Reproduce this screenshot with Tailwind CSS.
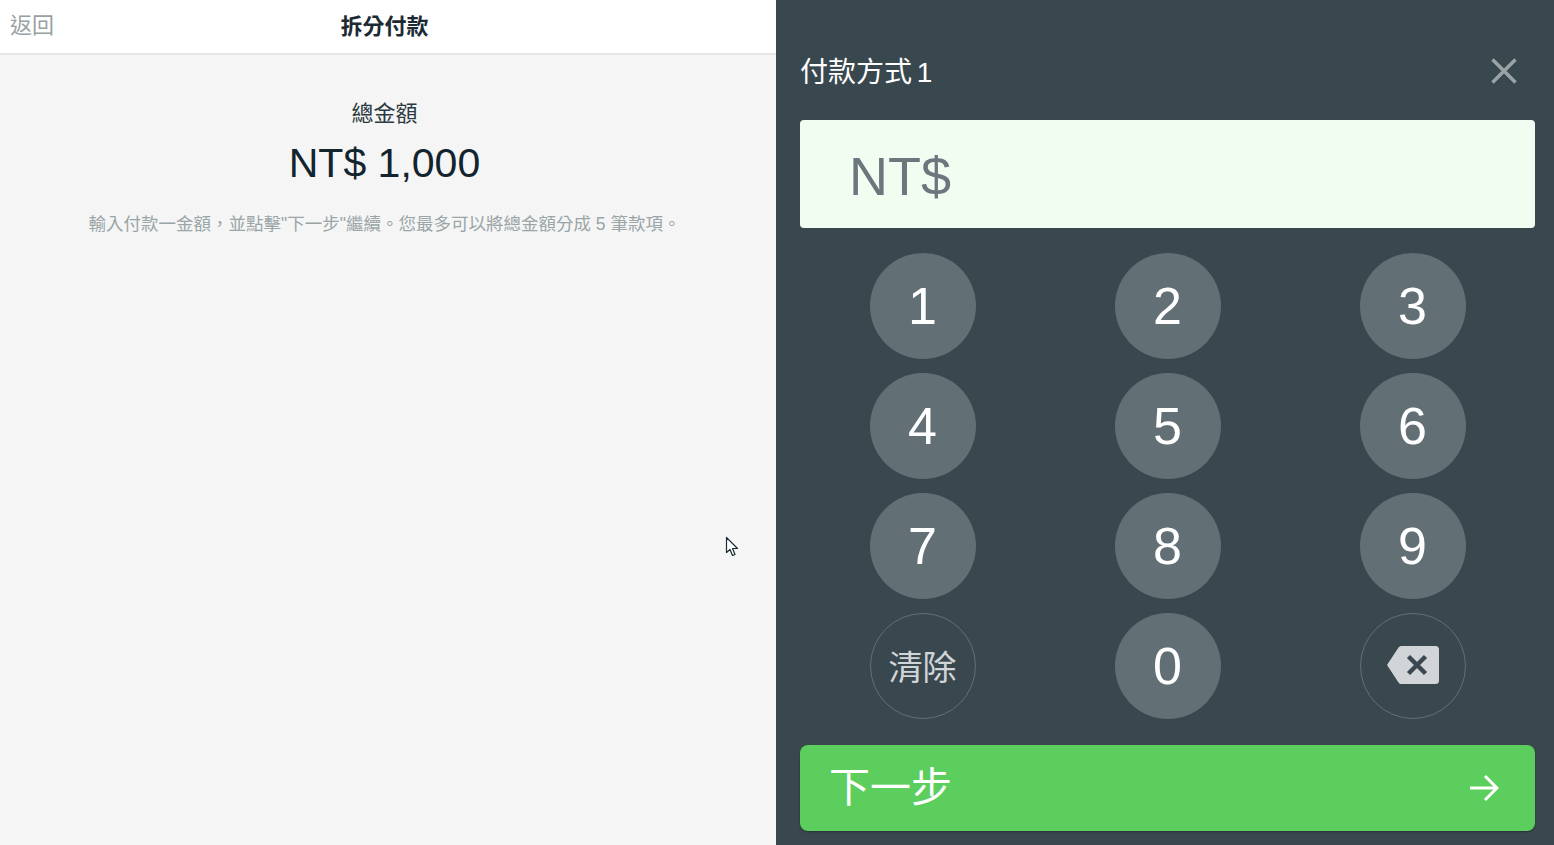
<!DOCTYPE html>
<html lang="zh-Hant">
<head>
    <meta charset="UTF-8">
    <title>拆分付款</title>
    <script src="https://cdn.jsdelivr.net/npm/@tailwindcss/browser@4"></script>
</head>
<body class="h-[845px] w-[1554px] overflow-hidden bg-[#f5f5f5] font-['Liberation_Sans','Noto_Sans_CJK_TC',sans-serif]">
    <div class="flex h-full">
        <!-- Left: summary -->
        <div class="relative w-[776px] bg-[#f5f5f5]">
            <header class="relative flex h-[55px] items-center justify-center border-b-2 border-[#e6e6e6] bg-white">
                <span class="absolute left-[10px] top-[12px] text-[22px] leading-[28px] text-[#97a1a3]">返回</span>
                <h1 class="mr-[7px] text-[22px] font-bold leading-[28px] text-[#1c2b33]">拆分付款</h1>
            </header>
            <div class="flex flex-col items-center pr-[7px]">
                <p class="mt-[44px] text-[22px] leading-[30px] text-[#2b3a42]">總金額</p>
                <p class="mt-[9px] text-[41px] leading-[50px] text-[#12242e]">NT$ 1,000</p>
                <p class="mt-[23px] text-[17.500px] leading-[26px] text-[#9aa5a7]">輸入付款一金額，並點擊"下一步"繼續。您最多可以將總金額分成 5 筆款項。</p>
            </div>
            <!-- mouse pointer -->
            <svg class="absolute left-[725px] top-[536px]" width="15" height="22" viewBox="0 0 15 22">
                <path d="M1.500 1.500V16.500L5 13.500L7.500 19.500L10 18.500L7.500 12.500H12.500Z" fill="#fff" stroke="#1c2b33" stroke-width="1.200" stroke-linejoin="round"/>
            </svg>
        </div>

        <!-- Right: keypad -->
        <div class="flex w-[778px] flex-col bg-[#39474f] pl-[24px] pr-[19px]">
            <div class="flex h-[120px] items-center justify-between pt-[22px]">
                <span class="mt-[3px] text-[28px] leading-[36px] text-white [word-spacing:-3px]">付款方式 1</span>
                <svg class="mr-[17px]" width="28" height="28" viewBox="0 0 28 28" fill="none" stroke="#9ba3a7" stroke-width="3.500">
                    <path d="M2.500 2.500L25.500 25.500M25.500 2.500L2.500 25.500"/>
                </svg>
            </div>
            <div class="flex h-[108px] items-center rounded-[4px] bg-[#f1fdf1] pl-[49px] pt-[4px] text-[54px] text-[#6b777d]">NT$</div>
            <div class="mt-[25px] grid grid-cols-3 gap-y-[14px] justify-items-center [&>div]:size-[106px] [&>div]:rounded-full">
                <div class="flex items-center justify-center bg-[#627076] text-[52px] text-white">1</div>
                <div class="flex items-center justify-center bg-[#627076] text-[52px] text-white">2</div>
                <div class="flex items-center justify-center bg-[#627076] text-[52px] text-white">3</div>
                <div class="flex items-center justify-center bg-[#627076] text-[52px] text-white">4</div>
                <div class="flex items-center justify-center bg-[#627076] text-[52px] text-white">5</div>
                <div class="flex items-center justify-center bg-[#627076] text-[52px] text-white">6</div>
                <div class="flex items-center justify-center bg-[#627076] text-[52px] text-white">7</div>
                <div class="flex items-center justify-center bg-[#627076] text-[52px] text-white">8</div>
                <div class="flex items-center justify-center bg-[#627076] text-[52px] text-white">9</div>
                <div class="flex items-center justify-center border border-[#627076] pt-[5px] text-[34px] text-[#d1d5d7]">清除</div>
                <div class="flex items-center justify-center bg-[#627076] text-[52px] text-white">0</div>
                <div class="flex items-center justify-center border border-[#627076]">
                    <svg class="mb-[2px]" width="54" height="40" viewBox="0 0 54 40">
                        <path d="M15 1H49.500Q53 1 53 4.500V35.500Q53 39 49.500 39H15Q13.500 39 12.500 37.500L1 20L12.500 2.500Q13.500 1 15 1Z" fill="#d2d5d7"/>
                        <path d="M22.500 11.500L39.500 28.500M39.500 11.500L22.500 28.500" stroke="#39474f" stroke-width="4.500" fill="none"/>
                    </svg>
                </div>
            </div>
            <div class="mt-[26px] flex h-[86px] items-center justify-between rounded-[8px] bg-[#5bce5d] pl-[29px] pr-[36px] shadow-[0_1px_2px_rgba(0,0,0,0.3)]">
                <span class="text-[41px] leading-[48px] text-white">下一步</span>
                <svg width="30" height="28" viewBox="0 0 30 28" fill="none" stroke="#fff" stroke-width="3">
                    <path d="M1 14H28M16 2L28 14L16 26"/>
                </svg>
            </div>
        </div>
    </div>
</body>
</html>
